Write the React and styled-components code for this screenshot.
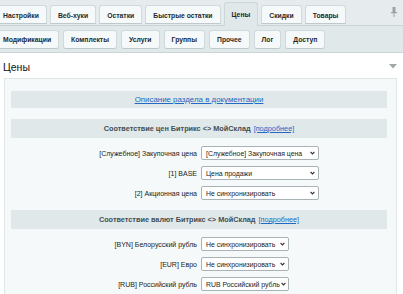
import React from "react";
import styled, { createGlobalStyle } from "styled-components";

const Global = createGlobalStyle`
  html, body { margin: 0; padding: 0; background: #fff; }
  body { font-family: "Liberation Sans", Arial, sans-serif; overflow: hidden; }
`;

const Page = styled.div`
  width: 403px;
  height: 294px;
  overflow: hidden;
  background: #fff;
`;

const TopStrip = styled.div`
  display: flex;
  align-items: flex-end;
  gap: 3px;
  height: 25px;
  padding-right: 6px;
  background: #e6ecee;
  border-bottom: 1px solid #c9d2d5;
`;

const SubStrip = styled.div`
  display: flex;
  align-items: center;
  gap: 4px;
  height: 26px;
  background: #e0e8ea;
  border-bottom: 1px solid #cbd4d7;
`;

const Tab = styled.div`
  display: flex;
  align-items: center;
  justify-content: center;
  box-sizing: border-box;
  padding: 0 7px;
  font-size: 6.8px;
  font-weight: bold;
  color: #1f292c;
  white-space: nowrap;
  border: 1px solid ${(p) => (p.$active ? "#cdd6d8" : "#d0d9db")};
  border-radius: 3px 3px 0 0;
  background: ${(p) => (p.$active ? "#e0e8ea" : "#f6f9f9")};
  height: ${(p) => (p.$active ? "24px" : "19px")};
  margin-bottom: ${(p) => (p.$active ? "-1px" : "1px")};
  border-bottom: ${(p) => (p.$active ? "none" : "1px solid #bfc9cc")};
  padding-top: ${(p) => (p.$active ? "0" : "1px")};
  &:first-child { margin-left: -5px; }
`;

const SubTab = styled(Tab)`
  height: 19px;
  margin-bottom: 0;
  border-radius: 3px;
  border-bottom: 1px solid #bfc9cc;
`;

const Spacer = styled.div`
  flex: 1;
`;

const PinWrap = styled.div`
  align-self: center;
  display: flex;
  margin-bottom: 2px;
`;

const HeadRow = styled.div`
  display: flex;
  align-items: center;
  justify-content: space-between;
  height: 25px;
  padding: 2px 6px 0 3px;
  box-sizing: border-box;
`;

const Title = styled.h1`
  margin: 0;
  font-size: 10.5px;
  font-weight: normal;
  color: #111;
`;

const Panel = styled.div`
  margin: 0 6px 0 4px;
  padding: 12px 9px 0 6px;
  background: #f5f9f9;
  border: 1px solid #dfe7e9;
  border-bottom: none;
  min-height: 220px;
`;

const Bar = styled.div`
  display: flex;
  align-items: center;
  justify-content: center;
  height: ${(p) => p.$h || 19}px;
  background: #e0e8ea;
  font-size: 7.3px;
  font-weight: bold;
  color: #3f4f54;
  white-space: nowrap;
`;

const Link = styled.a`
  color: #2269c4;
  text-decoration: underline;
  font-weight: normal;
  font-size: ${(p) => (p.$big ? "7.9px" : "inherit")};
  margin-left: ${(p) => (p.$gap ? "3px" : "0")};
`;

const Section = styled.div`
  margin-top: ${(p) => (p.$first ? "11px" : "0")};
`;

const Rows = styled.div`
  padding: 5px 0 7px;
`;

const Row = styled.div`
  display: grid;
  grid-template-columns: 1fr 1fr;
  column-gap: 4px;
  align-items: center;
  height: 20px;
`;

const Label = styled.div`
  text-align: right;
  font-size: 7px;
  color: #222;
  white-space: nowrap;
`;

const Select = styled.div`
  display: flex;
  align-items: center;
  justify-content: space-between;
  gap: 1px;
  box-sizing: border-box;
  width: ${(p) => p.$w}px;
  height: 14px;
  padding: 0 3px 0 4px;
  background: #fff;
  border: 1px solid #a9b3b6;
  border-radius: 2px;
  font-size: 6.9px;
  color: #222;
  white-space: nowrap;
`;

const SelectText = styled.span`
  white-space: nowrap;
`;

const Chevron = () => (
  <svg width="5" height="4" viewBox="0 0 5 4" style={{ flexShrink: 0 }}>
    <path d="M0.6 1 L2.5 2.9 L4.4 1" fill="none" stroke="#333" strokeWidth="1.1" />
  </svg>
);

const Pin = () => (
  <svg width="6" height="10" viewBox="0 0 6 10">
    <rect x="1.5" y="0" width="3" height="5" fill="#9aa3a6" />
    <rect x="0" y="5" width="6" height="1.2" fill="#9aa3a6" />
    <rect x="2.5" y="6" width="1" height="4" fill="#9aa3a6" />
  </svg>
);

const Triangle = () => (
  <svg width="8" height="5" viewBox="0 0 8 5">
    <path d="M0 0 L8 0 L4 4.5 Z" fill="#9ea8ab" />
  </svg>
);

const topTabs = ["Настройки", "Веб-хуки", "Остатки", "Быстрые остатки", "Цены", "Скидки", "Товары"];
const subTabs = ["Модификации", "Комплекты", "Услуги", "Группы", "Прочее", "Лог", "Доступ"];

const priceRows = [
  ["[Служебное] Закупочная цена", "[Служебное] Закупочная цена"],
  ["[1] BASE", "Цена продажи"],
  ["[2] Акционная цена", "Не синхронизировать"],
];

const currencyRows = [
  ["[BYN] Белорусский рубль", "Не синхронизировать"],
  ["[EUR] Евро", "Не синхронизировать"],
  ["[RUB] Российский рубль", "RUB Российский рубль"],
];

export default function App() {
  return (
    <Page>
      <Global />
      <TopStrip>
        {topTabs.map((t) => (
          <Tab key={t} $active={t === "Цены"}>{t}</Tab>
        ))}
        <Spacer />
        <PinWrap><Pin /></PinWrap>
      </TopStrip>
      <SubStrip>
        {subTabs.map((t) => (
          <SubTab key={t}>{t}</SubTab>
        ))}
      </SubStrip>
      <HeadRow>
        <Title>Цены</Title>
        <Triangle />
      </HeadRow>
      <Panel>
        <Bar $h={17}>
          <Link href="#" $big>Описание раздела в документации</Link>
        </Bar>
        <Section $first>
          <Bar>
            Соответствие цен Битрикс &lt;&gt; МойСклад
            <Link href="#" $gap>[подробнее]</Link>
          </Bar>
          <Rows>
            {priceRows.map(([l, v]) => (
              <Row key={l}>
                <Label>{l}</Label>
                <Select $w={118}><SelectText>{v}</SelectText><Chevron /></Select>
              </Row>
            ))}
          </Rows>
        </Section>
        <Section>
          <Bar>
            Соответствие валют Битрикс &lt;&gt; МойСклад
            <Link href="#" $gap>[подробнее]</Link>
          </Bar>
          <Rows>
            {currencyRows.map(([l, v]) => (
              <Row key={l}>
                <Label>{l}</Label>
                <Select $w={88}><SelectText>{v}</SelectText><Chevron /></Select>
              </Row>
            ))}
          </Rows>
        </Section>
      </Panel>
    </Page>
  );
}
